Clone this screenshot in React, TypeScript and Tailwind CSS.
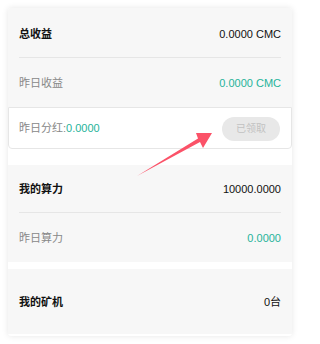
import React from "react";

const font = { fontFamily: '"Liberation Sans", "Noto Sans CJK SC", sans-serif' };

function Row({
  label,
  value,
  muted = false,
  divider = false,
  className = "h-[49px]",
}: {
  label: string;
  value: string;
  muted?: boolean;
  divider?: boolean;
  className?: string;
}) {
  return (
    <div className={`mx-[11px] flex items-center justify-between pt-[2px] ${divider ? "border-b border-[#e6e6e6]" : ""} ${className}`}>
      <span className={muted ? "text-[#888]" : "font-bold text-[#111]"}>{label}</span>
      <span className={muted ? "text-[#26b39a]" : "text-[#111]"}>{value}</span>
    </div>
  );
}

export default function App() {
  return (
    <div className="relative min-h-[344px] w-[300px] bg-white pt-[8px] text-[11px]" style={font}>
      <div className="mx-[8px] flex flex-col overflow-hidden rounded-[3px] bg-white shadow-[0_0_6px_rgba(0,0,0,0.1)]">
        <div className="bg-[#f7f7f7] pt-[1px]">
          <Row label="总收益" value="0.0000 CMC" divider />
          <Row label="昨日收益" value="0.0000 CMC" muted />
        </div>

        <div className="flex h-[42px] items-center justify-between rounded-b-[4px] border border-[#e6e6e6] bg-white pl-[10px] pr-[11px] pt-[1px]">
          <span className="text-[#888]">
            昨日分红:<span className="text-[#26b39a]">0.0000</span>
          </span>
          <button className="flex h-[24px] w-[58px] items-center justify-center rounded-full bg-[#e8e8e8] text-[10px] text-[#c2c2c2]">
            已领取
          </button>
        </div>

        <div className="mt-[16px] bg-[#f7f7f7]">
          <Row label="我的算力" value="10000.0000" divider className="h-[48px]" />
          <Row label="昨日算力" value="0.0000" muted />
        </div>

        <div className="mt-[7px] mb-[2px] bg-[#f7f7f7]">
          <Row label="我的矿机" value="0台" className="h-[65px]" />
        </div>
      </div>

      {/* annotation arrow */}
      <svg className="pointer-events-none absolute left-0 top-0" width="300" height="344" viewBox="0 0 300 344">
        <polygon points="137,176 198,138.5 196,133 212,133 203,148 200,142" fill="#fb5268" />
      </svg>
    </div>
  );
}
